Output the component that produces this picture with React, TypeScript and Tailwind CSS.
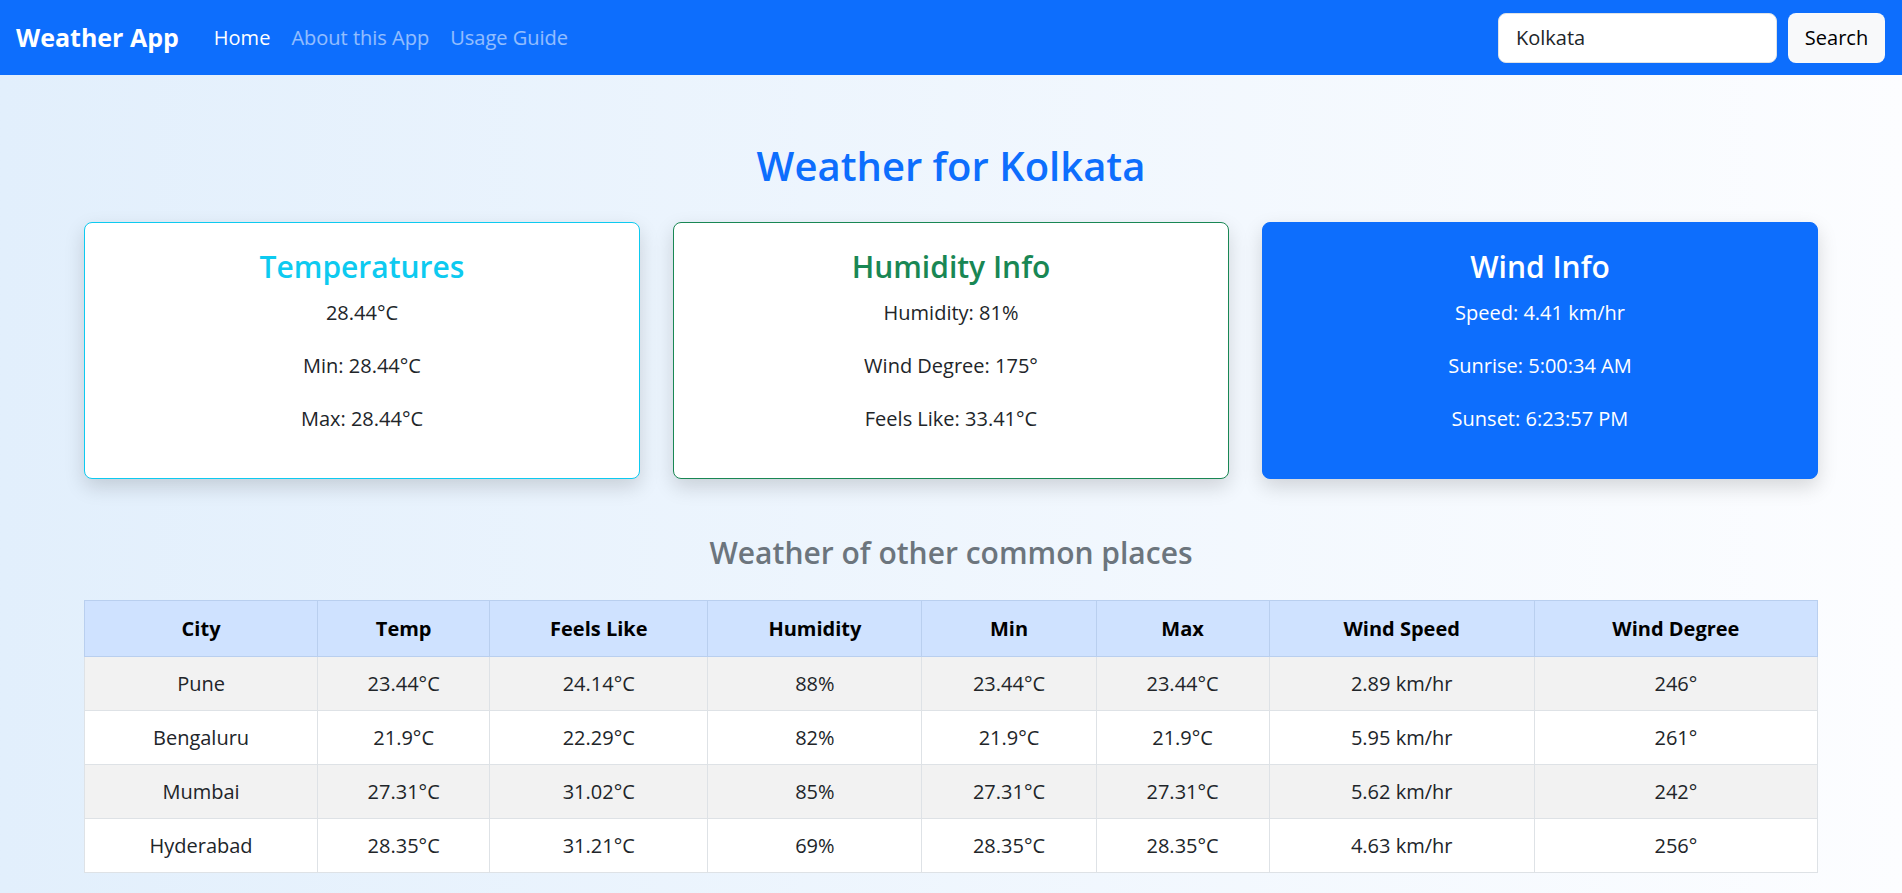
import React from 'react';

interface CityWeather {
	city: string;
	temp: string;
	feelsLike: string;
	humidity: string;
	min: string;
	max: string;
	windSpeed: string;
	windDegree: string;
}

const cities: CityWeather[] = [
	{ city: 'Pune', temp: '23.44°C', feelsLike: '24.14°C', humidity: '88%', min: '23.44°C', max: '23.44°C', windSpeed: '2.89 km/hr', windDegree: '246°' },
	{ city: 'Bengaluru', temp: '21.9°C', feelsLike: '22.29°C', humidity: '82%', min: '21.9°C', max: '21.9°C', windSpeed: '5.95 km/hr', windDegree: '261°' },
	{ city: 'Mumbai', temp: '27.31°C', feelsLike: '31.02°C', humidity: '85%', min: '27.31°C', max: '27.31°C', windSpeed: '5.62 km/hr', windDegree: '242°' },
	{ city: 'Hyderabad', temp: '28.35°C', feelsLike: '31.21°C', humidity: '69%', min: '28.35°C', max: '28.35°C', windSpeed: '4.63 km/hr', windDegree: '256°' },
];

const columns = [
	{ label: 'City', width: 'w-[233px]' },
	{ label: 'Temp', width: 'w-[172px]' },
	{ label: 'Feels Like', width: 'w-[218px]' },
	{ label: 'Humidity', width: 'w-[214px]' },
	{ label: 'Min', width: 'w-[174px]' },
	{ label: 'Max', width: 'w-[173px]' },
	{ label: 'Wind Speed', width: 'w-[265px]' },
	{ label: 'Wind Degree', width: 'w-[283px]' },
];

function Navbar() {
	return (
		<nav className="flex h-[75px] items-center justify-between bg-[#0d6efd] pl-[16px] pr-[17px]">
			<div className="flex items-center">
				<span className="mr-[25px] text-[25px] font-bold text-white">Weather App</span>
				<a className="px-[10px] text-[20px] text-white">Home</a>
				<a className="px-[11px] text-[20px] text-white/55">About this App</a>
				<a className="px-[10px] text-[20px] text-white/55">Usage Guide</a>
			</div>
			<form className="flex items-center gap-[11px]" onSubmit={(e) => e.preventDefault()}>
				<input
					defaultValue="Kolkata"
					className="h-[50px] w-[279px] rounded-[8px] border border-[#dee2e6] bg-white px-[17px] text-[20px] text-[#212529] outline-none"
				/>
				<button className="h-[50px] w-[97px] rounded-[8px] bg-[#f8f9fa] text-[20px] text-black">Search</button>
			</form>
		</nav>
	);
}

interface InfoCardProps {
	title: string;
	lines: string[];
	className: string;
	titleClass: string;
	textClass: string;
}

function InfoCard({ title, lines, className, titleClass, textClass }: InfoCardProps) {
	return (
		<div className={`flex flex-col items-center rounded-[8px] pt-[24px] pb-[44px] shadow-[0_8px_20px_rgba(0,0,0,0.15)] ${className}`}>
			<h3 className={`text-[30px] leading-[40px] font-semibold ${titleClass}`}>{title}</h3>
			<div className={`mt-[11px] flex flex-col items-center gap-[23px] text-[20px] leading-[30px] ${textClass}`}>
				{lines.map((line) => (
					<p key={line}>{line}</p>
				))}
			</div>
		</div>
	);
}

export default function App() {
	return (
		<div className="min-h-[893px] bg-linear-to-r from-[#e2effc] to-[#fcfdff] font-['Segoe_UI','Open_Sans',sans-serif] text-[#212529]">
			<Navbar />
			<main className="px-[84px]">
				<h1 className="mt-[67px] text-center text-[40px] leading-[48px] font-semibold text-[#0d6efd]">Weather for Kolkata</h1>

				<div className="mt-[32px] grid grid-cols-3 gap-[33px]">
					<InfoCard
						title="Temperatures"
						lines={['28.44°C', 'Min: 28.44°C', 'Max: 28.44°C']}
						className="border border-[#0dcaf0] bg-white"
						titleClass="text-[#0dcaf0]"
						textClass="text-[#212529]"
					/>
					<InfoCard
						title="Humidity Info"
						lines={['Humidity: 81%', 'Wind Degree: 175°', 'Feels Like: 33.41°C']}
						className="border border-[#198754] bg-white"
						titleClass="text-[#198754]"
						textClass="text-[#212529]"
					/>
					<InfoCard
						title="Wind Info"
						lines={['Speed: 4.41 km/hr', 'Sunrise: 5:00:34 AM', 'Sunset: 6:23:57 PM']}
						className="border border-[#0d6efd] bg-[#0d6efd]"
						titleClass="text-white"
						textClass="text-white"
					/>
				</div>

				<h4 className="mt-[56px] text-center text-[30px] leading-[36px] font-semibold text-[#6c757d]">
					Weather of other common places
				</h4>

				<table className="mt-[29px] w-full table-fixed border-collapse text-center text-[20px]">
					<colgroup>
						{columns.map((c) => (
							<col key={c.label} className={c.width} />
						))}
					</colgroup>
					<thead>
						<tr className="h-[56px] bg-[#cfe2ff]">
							{columns.map((c) => (
								<th key={c.label} className="border border-[#b9cfef] font-bold text-black">
									{c.label}
								</th>
							))}
						</tr>
					</thead>
					<tbody>
						{cities.map((row, i) => (
							<tr key={row.city} className={`h-[54px] ${i % 2 === 0 ? 'bg-[#f2f2f2]' : 'bg-white'}`}>
								{[row.city, row.temp, row.feelsLike, row.humidity, row.min, row.max, row.windSpeed, row.windDegree].map((v, j) => (
									<td key={j} className="border border-[#dee2e6] text-[#212529]">
										{v}
									</td>
								))}
							</tr>
						))}
					</tbody>
				</table>
			</main>
		</div>
	);
}
